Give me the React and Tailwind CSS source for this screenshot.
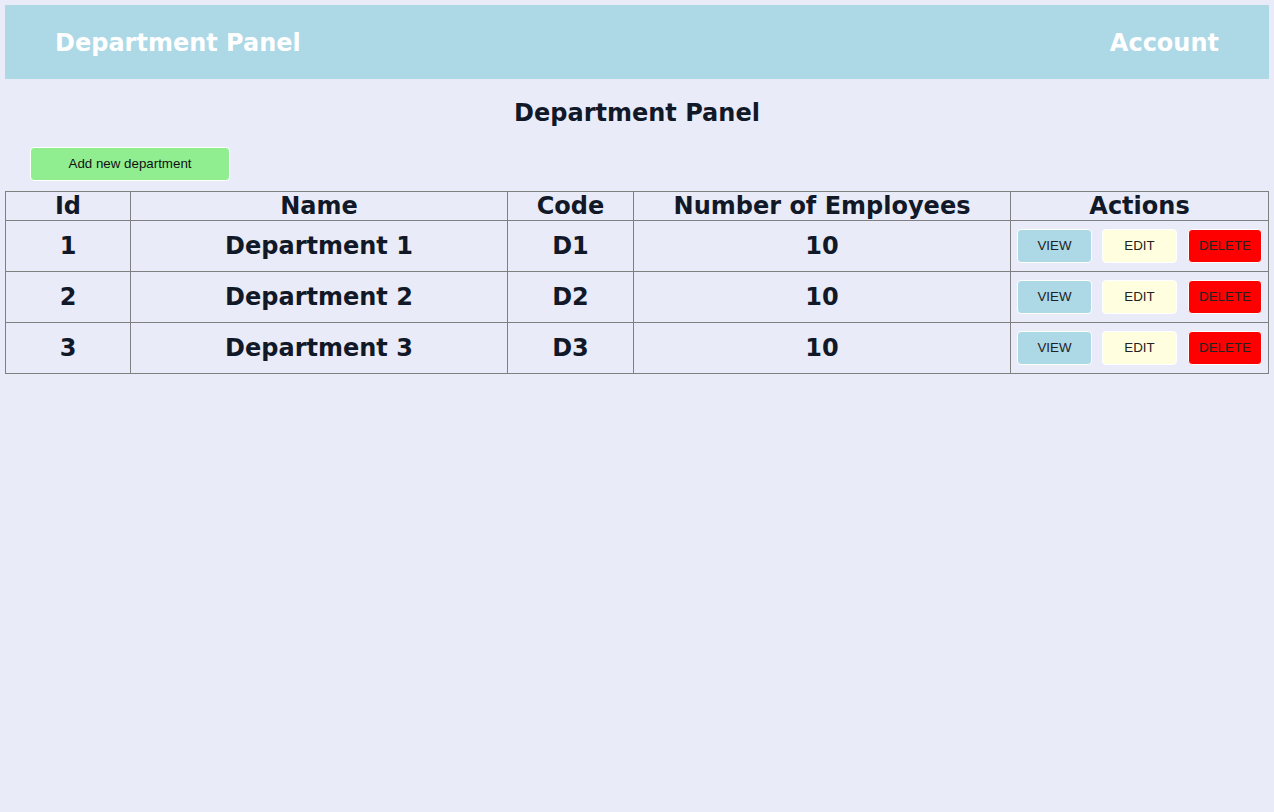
import React from "react";

const rows = [
  { id: 1, name: "Department 1", code: "D1", n: 10 },
  { id: 2, name: "Department 2", code: "D2", n: 10 },
  { id: 3, name: "Department 3", code: "D3", n: 10 },
];

export default function App() {
  return (
    <div className="min-h-[812px] bg-[#e9ebf8] p-[5px] text-[#111827]" style={{ fontFamily: '"DejaVu Sans", Verdana, sans-serif' }}>
      <header className="flex h-[74px] items-center justify-between bg-[#add8e6] pl-[50px] pr-[50px] pt-[1px] text-white">
        <div className="text-[24px] font-bold">Department Panel</div>
        <div className="text-[24px] font-bold">Account</div>
      </header>
      <h1 className="mt-[18px] text-center text-[24px] font-bold leading-[32px]">Department Panel</h1>
      <div className="mt-[18px] pl-[25px]">
        <button className="h-[34px] w-[200px] rounded-[4px] border border-white bg-[#90ee90] text-[13.33px] text-[#111]" style={{ fontFamily: '"Liberation Sans", Arial, sans-serif' }}>
          Add new department
        </button>
      </div>
      <table className="mt-[10px] w-full border-collapse border border-[#808080] table-fixed">
        <thead>
          <tr className="h-[29px]">
            <th className="w-[125px] border border-[#808080] p-0 text-[24px] leading-[27px] font-bold">Id</th>
            <th className="w-[377px] border border-[#808080] p-0 text-[24px] leading-[27px] font-bold">Name</th>
            <th className="w-[126px] border border-[#808080] p-0 text-[24px] leading-[27px] font-bold">Code</th>
            <th className="w-[377px] border border-[#808080] p-0 text-[24px] leading-[27px] font-bold">Number of Employees</th>
            <th className="border border-[#808080] p-0 text-[24px] leading-[27px] font-bold">Actions</th>
          </tr>
        </thead>
        <tbody>
          {rows.map((r) => (
            <tr key={r.id} className="h-[51px]">
              <td className="border border-[#808080] p-0 text-center text-[24px] font-bold">{r.id}</td>
              <td className="border border-[#808080] p-0 text-center text-[24px] font-bold">{r.name}</td>
              <td className="border border-[#808080] p-0 text-center text-[24px] font-bold">{r.code}</td>
              <td className="border border-[#808080] p-0 text-center text-[24px] font-bold">{r.n}</td>
              <td className="border border-[#808080] p-0">
                <div className="flex items-center pl-[6px]" style={{ fontFamily: '"Liberation Sans", Arial, sans-serif' }}>
                  <button className="h-[34px] w-[75px] rounded-[4px] border border-white bg-[#add8e6] text-[13.33px] text-[#222]">VIEW</button>
                  <button className="ml-[10px] h-[34px] w-[75px] rounded-[4px] border border-white bg-[#ffffe0] text-[13.33px] text-[#222]">EDIT</button>
                  <button className="ml-[11px] h-[34px] w-[74px] rounded-[4px] border border-white bg-[#ff0000] text-[13.33px] text-[#222]">DELETE</button>
                </div>
              </td>
            </tr>
          ))}
        </tbody>
      </table>
    </div>
  );
}
